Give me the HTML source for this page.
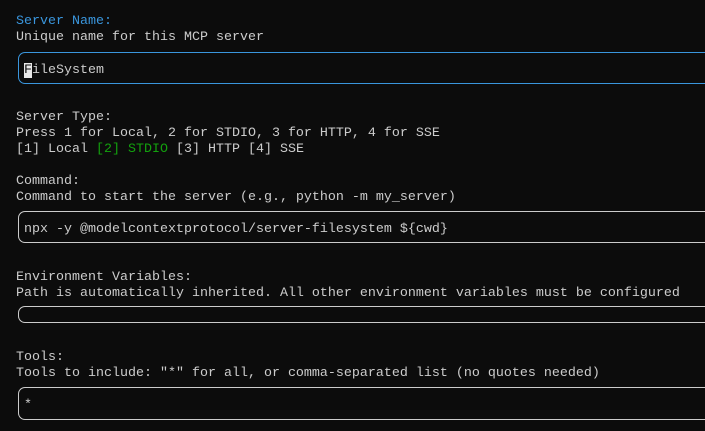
<!DOCTYPE html>
<html><head><meta charset="utf-8"><style>
html,body{margin:0;padding:0;background:#0c0c0c;width:705px;height:431px;overflow:hidden}
.t{position:absolute;left:16px;font-family:"Liberation Mono","Noto Sans CJK SC",monospace;font-size:13.33px;line-height:16px;color:#cccccc;white-space:pre}
.b{position:absolute;left:18px;right:0;border:1px solid #cccccc;border-right:none;border-radius:7px 0 0 7px}
.blue{color:#3a96dd}.green{color:#13a10e}
.cur{background:#e8e8e8;color:#0c0c0c}
</style></head><body>
<div class="t blue" style="top:14px">Server Name:</div>
<div class="t" style="top:30px">Unique name for this MCP server</div>
<div class="b" style="top:52px;height:30px;border-color:#3a96dd"></div>
<div class="t" style="top:63px;left:24px"><span class="cur">F</span>ileSystem</div>

<div class="t" style="top:110px">Server Type:</div>
<div class="t" style="top:126px">Press 1 for Local, 2 for STDIO, 3 for HTTP, 4 for SSE</div>
<div class="t" style="top:142px">[1] Local <span class="green">[2] STDIO</span> [3] HTTP [4] SSE</div>

<div class="t" style="top:174px">Command:</div>
<div class="t" style="top:190px">Command to start the server (e.g., python -m my_server)</div>
<div class="b" style="top:211px;height:30px"></div>
<div class="t" style="top:222px;left:24px">npx -y @modelcontextprotocol/server-filesystem ${cwd}</div>

<div class="t" style="top:270px">Environment Variables:</div>
<div class="t" style="top:286px">Path is automatically inherited. All other environment variables must be configured</div>
<div class="b" style="top:306px;height:15px"></div>

<div class="t" style="top:350px">Tools:</div>
<div class="t" style="top:366px">Tools to include: "*" for all, or comma-separated list (no quotes needed)</div>
<div class="b" style="top:387px;height:31px"></div>
<div class="t" style="top:398px;left:24px">*</div>
</body></html>
